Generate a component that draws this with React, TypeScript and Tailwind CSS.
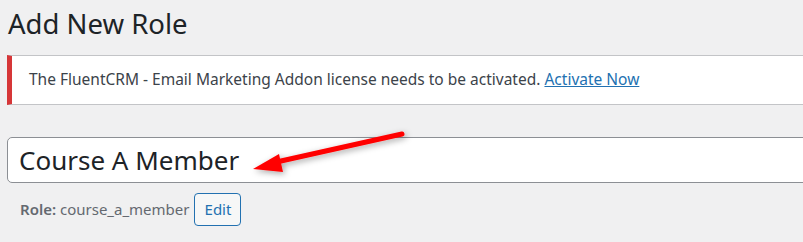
import React from "react";

const font = { fontFamily: '"Noto Sans", "Open Sans", sans-serif' };

const Arrow: React.FC = () => (
  <svg
    className="pointer-events-none absolute left-0 top-0"
    width="803"
    height="242"
    viewBox="0 0 803 242"
  >
    <defs>
      <filter id="shadow" x="-20%" y="-50%" width="140%" height="200%">
        <feDropShadow dx="2" dy="2" stdDeviation="3" floodColor="#000" floodOpacity="0.35" />
      </filter>
    </defs>
    <g filter="url(#shadow)">
      <line x1="402" y1="134" x2="272" y2="163" stroke="#ff0000" strokeWidth="5" strokeLinecap="round" />
      <polygon points="253,169 279,154 283,172" fill="#ff0000" />
    </g>
  </svg>
);

export default function App() {
  return (
    <div className="relative h-[242px] w-[803px] overflow-hidden bg-[#f0f0f1]" style={font}>
      <div className="w-[840px] pl-[7px]">
        <h1 className="pl-px pt-[6px] text-[27.5px] leading-[36px] text-[#1d2327]">Add New Role</h1>
        <div className="mt-[13px] flex h-[50px] items-center border border-l-[5px] border-[#c3c4c7] border-l-[#d63638] bg-white pl-[17px]">
          <p className="text-[15.5px] text-[#3c434a]">
            The FluentCRM - Email Marketing Addon license needs to be activated.{" "}
            <a href="#" className="text-[#2271b1] underline">
              Activate Now
            </a>
          </p>
        </div>
        <div className="mt-[32px] flex h-[46px] items-center rounded-[5px] border border-[#8c8f94] bg-white pl-[11px]">
          <span className="text-[26px] text-[#1d2327]">Course A Member</span>
        </div>
        <div className="mt-[10px] flex items-center pl-[13px]">
          <span className="text-[15px] text-[#646970]">
            <strong className="font-semibold">Role:</strong> course_a_member
          </span>
          <button className="ml-[5px] flex h-[33px] w-[47px] items-center justify-center rounded-[4px] border border-[#2271b1] bg-[#f6f7f7] text-[15px] text-[#2271b1]">
            Edit
          </button>
        </div>
      </div>
      <Arrow />
    </div>
  );
}
